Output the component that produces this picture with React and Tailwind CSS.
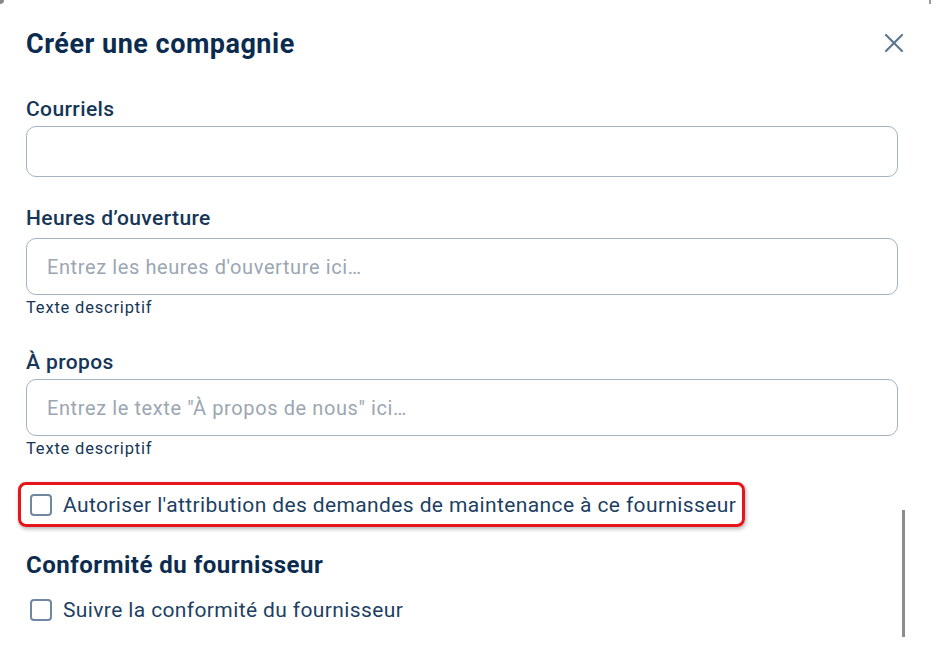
import React from 'react';

const Field = ({ label, placeholder, hint, h, mt, inputMt }) => (
  <div className={mt}>
    <label className="block text-[21px] leading-[24px] tracking-[0.4px] font-medium text-[#163658]">{label}</label>
    <input
      type="text"
      placeholder={placeholder}
      className={`${inputMt} ${h} w-full rounded-[10px] border-[1.5px] border-[#a3b3c4] bg-white px-[20px] text-[20px] tracking-[0.6px] text-[#163658] placeholder:text-[#9ba6b3] outline-none`}
    />
    {hint && <p className="text-[16.5px] leading-[20px] tracking-[0.8px] text-[#163658] mt-[3px]">{hint}</p>}
  </div>
);

const Box = () => (
  <span className="w-[22px] h-[22px] rounded-[4px] border-2 border-[#6f87a0] bg-white flex-shrink-0"></span>
);

export default function App() {
  return (
    <div className="relative w-[940px] h-[646px] bg-white overflow-hidden" style={{ fontFamily: 'Roboto, "Noto Sans", sans-serif' }}>
      <div className="absolute left-0 top-0 w-[4px] h-[4px] rounded-br-full bg-[#8a8a8a]"></div>
      <div className="absolute left-[929px] top-0 w-[2px] h-[4px] bg-[#9a9a9a]"></div>
      <div className="absolute left-[902px] top-[510px] w-[3px] h-[127px] bg-[#8c8c8c]"></div>

      <div className="px-[26px] pt-[28px] w-[924px]">
        <div className="flex items-center justify-between">
          <h1 className="text-[27px] leading-[32px] tracking-[0.5px] font-bold text-[#0c2c4f]">Créer une compagnie</h1>
          <svg width="20" height="20" viewBox="0 0 20 20" className="-mr-[6px] -mt-[3px]" fill="none" stroke="#5b768f" strokeWidth="2.2" strokeLinecap="round">
            <line x1="2" y1="2" x2="18" y2="18" />
            <line x1="18" y1="2" x2="2" y2="18" />
          </svg>
        </div>

        <div className="w-[872px]">
          <Field label="Courriels" h="h-[51px]" mt="mt-[37px]" inputMt="mt-[5px]" />
          <Field
            label="Heures d’ouverture"
            placeholder="Entrez les heures d'ouverture ici…"
            hint="Texte descriptif"
            h="h-[57px]"
            mt="mt-[29px]"
            inputMt="mt-[8px]"
          />
          <Field
            label="À propos"
            placeholder='Entrez le texte "À propos de nous" ici…'
            hint="Texte descriptif"
            h="h-[57px]"
            mt="mt-[32px]"
            inputMt="mt-[5px]"
          />
        </div>

        <div className="mt-[23px] -ml-[8px] inline-flex items-center gap-[11px] h-[45px] pl-[9px] pr-[6px] border-[3px] border-[#e8141b] rounded-[8px] shadow-[1px_2px_4px_rgba(0,0,0,0.3)]">
          <Box />
          <span className="text-[21px] leading-[24px] tracking-[0.38px] text-[#1d3f63]">Autoriser l'attribution des demandes de maintenance à ce fournisseur</span>
        </div>

        <h2 className="mt-[24px] text-[24px] leading-[28px] tracking-[0.5px] font-bold text-[#0c2c4f]">Conformité du fournisseur</h2>

        <div className="mt-[19px] flex items-center gap-[11px] pl-[4px]">
          <Box />
          <span className="text-[21px] leading-[24px] tracking-[0.38px] text-[#1d3f63]">Suivre la conformité du fournisseur</span>
        </div>
      </div>
    </div>
  );
}
